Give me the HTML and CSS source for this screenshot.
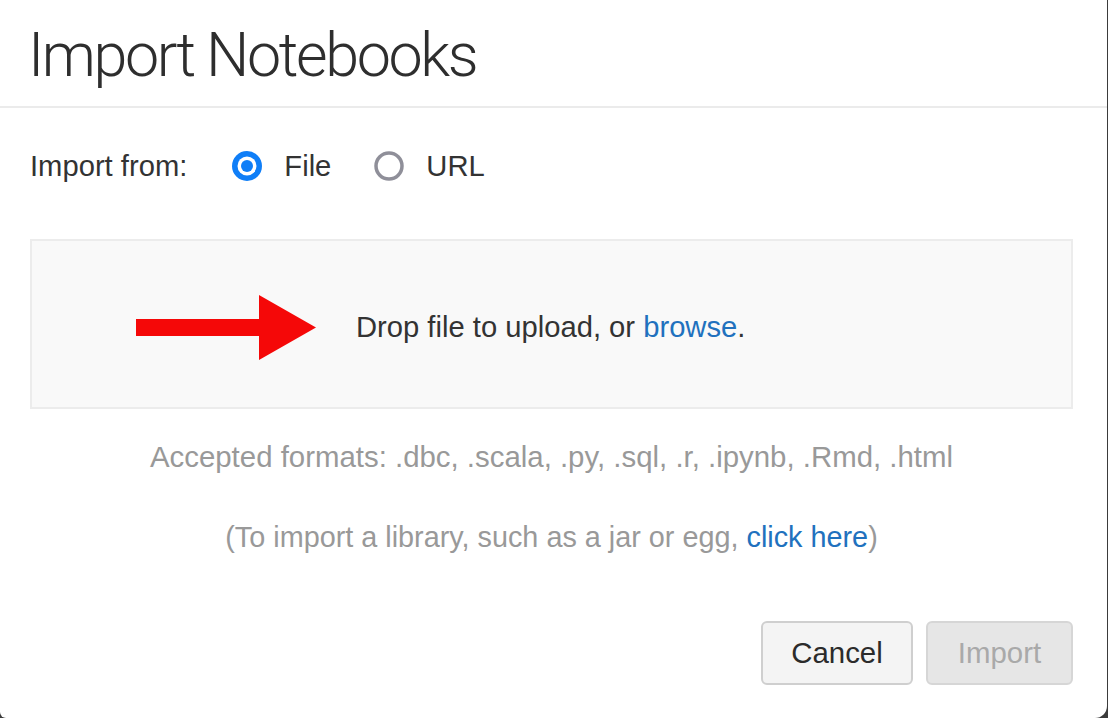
FILE: index.html
```html
<!DOCTYPE html>
<html lang="en">
<head>
<meta charset="utf-8">
<title>Import Notebooks</title>
<link rel="stylesheet" href="styles.css">
</head>
<body>
<div class="modal">
  <div class="modal-header">
    <h1 class="title">Import Notebooks</h1>
  </div>
  <div class="modal-body">
    <div class="source-row">
      <span class="source-label">Import from:</span>
      <label class="radio">
        <svg class="radio-icon" width="30" height="30" viewBox="0 0 30 30"><circle cx="15" cy="15" r="15" fill="#0f7ef7"/><circle cx="15" cy="15" r="9.5" fill="#fff"/><circle cx="15" cy="15" r="6" fill="#0f7ef7"/></svg>
        <span>File</span>
      </label>
      <label class="radio">
        <svg class="radio-icon" width="30" height="30" viewBox="0 0 30 30"><circle cx="15" cy="15" r="13" fill="#fff" stroke="#8f8f99" stroke-width="3.5"/></svg>
        <span>URL</span>
      </label>
    </div>
    <div class="dropzone">
      <svg class="arrow" width="180" height="65" viewBox="0 0 180 65"><path d="M0 24 H123 V0 L180 32.5 L123 65 V41 H0 Z" fill="#f50808"/></svg>
      <span class="drop-text">Drop file to upload, or <a class="link" href="#">browse</a>.</span>
    </div>
    <p class="note formats">Accepted formats: .dbc, .scala, .py, .sql, .r, .ipynb, .Rmd, .html</p>
    <p class="note library">(To import a library, such as a jar or egg, <a class="link" href="#">click here</a>)</p>
    <div class="actions">
      <button class="btn btn-cancel">Cancel</button>
      <button class="btn btn-import" disabled>Import</button>
    </div>
  </div>
</div>
</body>
</html>
```

FILE: styles.css
```css
html, body {
  margin: 0;
  padding: 0;
}
body {
  background: #3b3b3b;
  width: 1108px;
  height: 718px;
  overflow: hidden;
  font-family: "Liberation Sans", Arial, sans-serif;
  color: #333;
}
.modal {
  width: 1107px;
  height: 718px;
  background: #fff;
  border-radius: 0 0 12px 6px;
  box-sizing: border-box;
}
.modal-header {
  height: 106px;
  border-bottom: 2px solid #ebebeb;
  padding-left: 28px;
  box-sizing: content-box;
}
.title {
  margin: 0;
  padding-top: 17px;
  font-family: "Roboto", "Liberation Sans", sans-serif;
  font-weight: 300;
  font-size: 61px;
  line-height: 76px;
  letter-spacing: -2.4px;
  color: #2e2e2e;
}
.modal-body {
  padding: 0 34px 0 30px;
}
.source-row {
  display: flex;
  align-items: center;
  height: 30px;
  margin-top: 43px;
  font-size: 29.2px;
}
.source-label {
  margin-right: 45px;
}
.radio {
  display: flex;
  align-items: center;
  gap: 22px;
  margin-right: 43px;
}
.radio-icon {
  display: block;
}
.dropzone {
  margin-top: 58px;
  height: 166px;
  border: 2px solid #ececec;
  background: #f9f9f9;
  display: flex;
  align-items: center;
  padding-left: 104px;
  font-size: 29.2px;
}
.arrow {
  display: block;
  margin-right: 40px;
  margin-top: 7px;
}
.drop-text {
  margin-top: 6px;
}
.link {
  color: #2171be;
  text-decoration: none;
}
.note {
  margin: 0;
  text-align: center;
  font-size: 29.4px;
  color: #999;
  line-height: 32px;
}
.formats {
  margin-top: 32px;
}
.library {
  margin-top: 48px;
  font-size: 28.8px;
}
.actions {
  display: flex;
  justify-content: flex-end;
  gap: 13px;
  margin-top: 68px;
}
.btn {
  height: 64px;
  border-radius: 6px;
  font-family: "Liberation Sans", Arial, sans-serif;
  font-size: 29.4px;
  padding: 0;
  box-sizing: border-box;
}
.btn-cancel {
  width: 152px;
  background: #f4f4f4;
  border: 2px solid #cfcfcf;
  color: #2b2b2b;
}
.btn-import {
  width: 147px;
  background: #e6e6e6;
  border: 2px solid #d6d6d6;
  color: #a9a9a9;
}
```
